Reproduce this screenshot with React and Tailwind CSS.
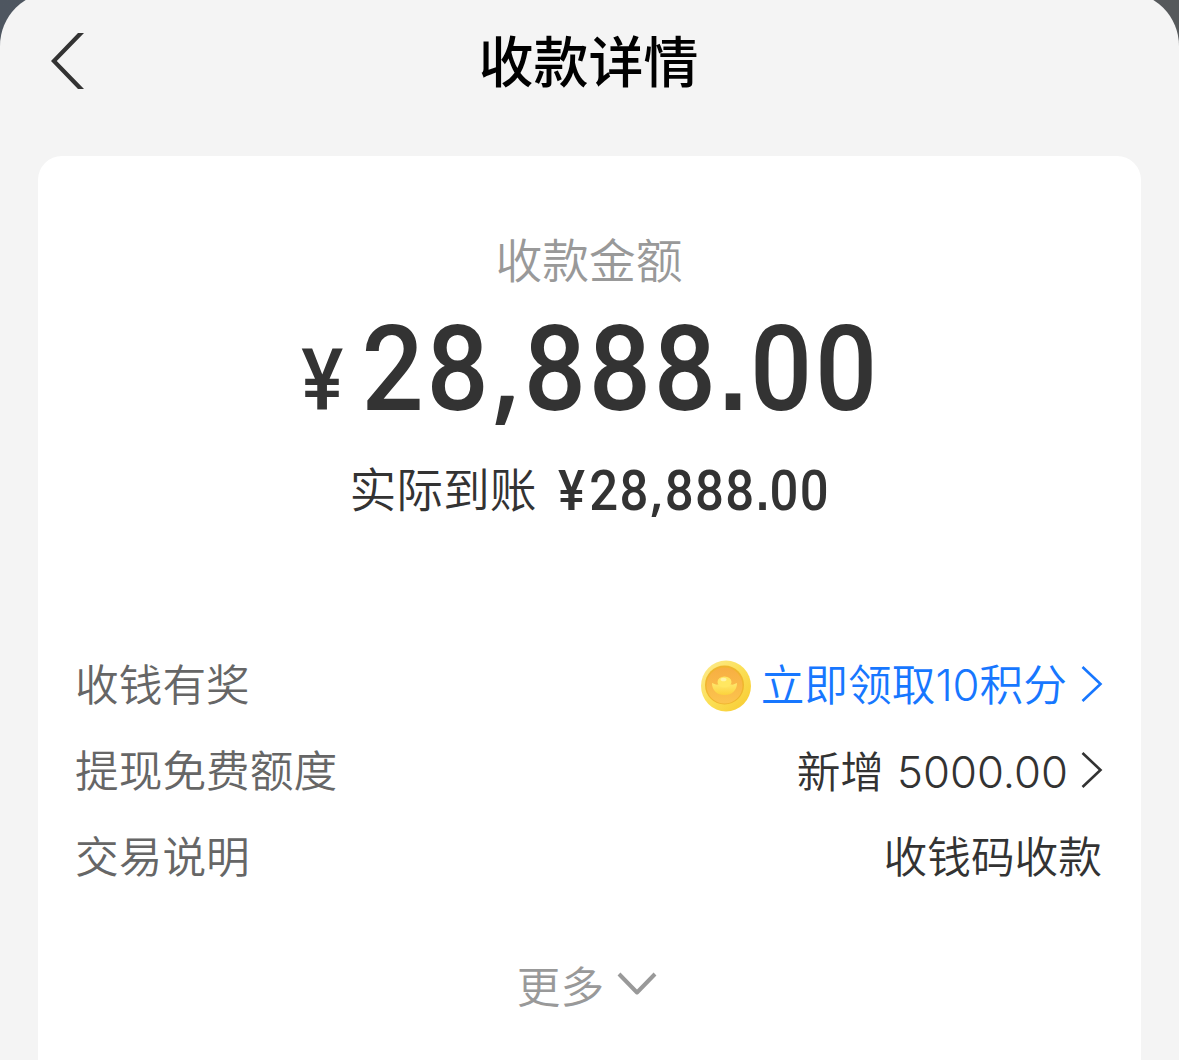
function Coin() {
  return (
    <svg width="52" height="54" viewBox="0 0 52 54" className="mt-[8px] shrink-0">
      <defs>
        <linearGradient id="coinRim" x1="0" y1="0" x2="1" y2="1">
          <stop offset="0" stopColor="#fdec94" />
          <stop offset="0.5" stopColor="#fbdf55" />
          <stop offset="1" stopColor="#f7c92e" />
        </linearGradient>
        <linearGradient id="coinFace" x1="0" y1="0" x2="0" y2="1">
          <stop offset="0" stopColor="#f7ae42" />
          <stop offset="1" stopColor="#fcc44e" />
        </linearGradient>
        <linearGradient id="ingot" x1="0" y1="0" x2="0" y2="1">
          <stop offset="0" stopColor="#ffe86e" />
          <stop offset="1" stopColor="#fcd23c" />
        </linearGradient>
      </defs>
      <ellipse cx="26" cy="27" rx="25" ry="25.5" fill="url(#coinRim)" />
      <circle cx="24.5" cy="26" r="19.5" fill="#f0b52e" />
      <circle cx="24.5" cy="26.5" r="18" fill="url(#coinFace)" />
      <path d="M12 24c2 1 4.500 2 6 1.500l13 0c2 .500 4-.500 6-1.500c0 7.500-5 12-12.500 12S12 31.500 12 24z" fill="url(#ingot)" />
      <ellipse cx="24.500" cy="23" rx="7" ry="5.500" fill="#ffe761" />
      <ellipse cx="23.500" cy="20.500" rx="3" ry="1.800" fill="#fff3a6" />
    </svg>
  );
}

function ArrowRight() {
  return (
    <svg width="22" height="38" viewBox="0 0 22 38" className="mt-[3px] shrink-0" fill="none" stroke="currentColor" strokeWidth="2.600">
      <path d="M1.500 2 19.500 19 1.500 36" />
    </svg>
  );
}

function Row({ label, children }) {
  return (
    <div className="flex h-[64px] items-center justify-between">
      <span className="text-[#666666]">{label}</span>
      <div className="flex h-[64px] items-center text-[#333333]">{children}</div>
    </div>
  );
}

export default function App() {
  return (
    <div className="flex h-[1060px] w-full flex-col overflow-hidden bg-linear-to-r from-[#4e5660] to-[#56595b] font-['Noto_Sans_CJK_SC',sans-serif] font-[350]">
      <div className="-mt-[8px] flex flex-1 flex-col rounded-t-[54px] bg-[#f4f4f4] pt-[8px]">
        <header className="grid h-[156px] shrink-0 grid-cols-3 items-start">
          <button type="button" className="ml-[51px] mt-[33px] w-[33px]">
            <svg width="33" height="56" viewBox="0 0 33 56" fill="#333333">
              <path d="M33 0H27L0 28 27 56H33L5.800 28z" />
            </svg>
          </button>
          <h1 className="mr-[2px] mt-[18px] whitespace-nowrap text-center text-[55px] font-medium leading-[80px] text-black">
            收款详情
          </h1>
        </header>

        <main className="mx-[38px] flex flex-1 flex-col rounded-t-[24px] bg-white pl-[37px] pr-[38px]">
          <section className="flex flex-col items-center">
            <p className="mt-[67px] h-[70px] text-[46.800px] leading-[70px] text-[#999999]">收款金额</p>
            <p className="ml-[3px] mt-[6px] flex h-[130px] scale-x-[0.92] items-baseline whitespace-nowrap font-['Roboto',sans-serif] font-medium leading-[130px] text-[#333333]">
              <span className="mr-[20px] text-[86px]">¥</span>
              <span className="text-[119px] tracking-[3px]">
                28
                <span className="inline-block w-[35px] pr-[3px] text-center font-['Open_Sans',sans-serif] font-semibold tracking-normal">,</span>
                888
                <span className="inline-block w-[34px] pr-[3px] text-center font-['Liberation_Sans',sans-serif] text-[112px] font-bold tracking-normal">.</span>
                00
              </span>
            </p>
            <p className="ml-[12px] mt-[13px] flex h-[90px] items-center whitespace-nowrap leading-[90px] text-[#333333]">
              <span className="text-[46.800px]">实际到账</span>
              <span className="ml-[10px] mt-[8px] flex scale-x-[0.925] items-baseline font-['Roboto',sans-serif] text-[55px] font-medium tracking-[1.500px]">
                <span className="mr-[3px]">¥</span>
                28
                <span className="w-[16px] pr-px text-center font-['Open_Sans',sans-serif] font-semibold tracking-normal">,</span>
                888
                <span className="w-[15px] text-center font-['Liberation_Sans',sans-serif] text-[51px] font-bold tracking-normal">.</span>
                00
              </span>
            </p>
          </section>

          <section className="mt-[118px] flex flex-col gap-[22px] text-[43.700px] leading-[64px]">
            <Row label="收钱有奖">
              <Coin />
              <span className="ml-[9px] mr-[14px] mt-[3px] text-[#1777ff]">
                立即领取<span className="font-['Inter',sans-serif] font-light">10</span>积分
              </span>
              <span className="flex text-[#1777ff]">
                <ArrowRight />
              </span>
            </Row>
            <Row label="提现免费额度">
              <span className="mr-[13px] mt-[5px]">
                新增<span className="ml-[13px] font-['Inter',sans-serif] font-light">5000.00</span>
              </span>
              <ArrowRight />
            </Row>
            <Row label="交易说明">
              <span className="mr-px">收钱码收款</span>
            </Row>
          </section>

          <button type="button" className="mr-[4px] mt-[65px] flex h-[66px] items-center justify-center text-[43.700px] leading-[66px] text-[#999999]">
            更多
            <svg width="40" height="24" viewBox="0 0 40 24" fill="none" stroke="currentColor" strokeWidth="4" strokeLinejoin="round" className="ml-[13px]">
              <path d="M2 2 20 20.500 38 2" />
            </svg>
          </button>
        </main>
      </div>
    </div>
  );
}
